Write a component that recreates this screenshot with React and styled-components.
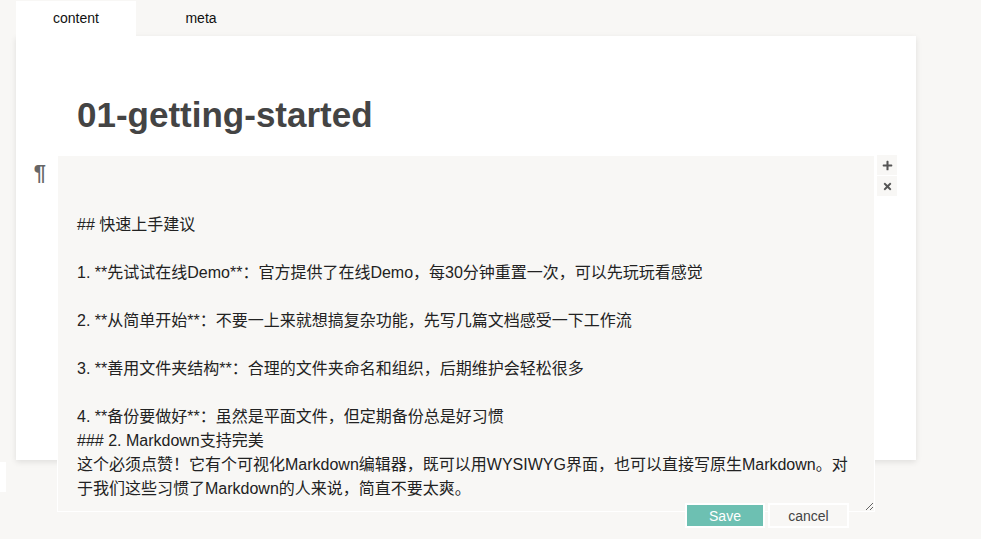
import styled, { createGlobalStyle } from "styled-components";
import { FaPlus, FaTimes } from "react-icons/fa";

const GlobalStyle = createGlobalStyle`
  html, body {
    margin: 0;
    padding: 0;
    background: #f8f7f5;
    font-family: "Liberation Sans", Arial, "Noto Sans CJK SC", sans-serif;
  }
`

const Page = styled.div`
  padding-top: 1px;
  min-height: 539px;
  box-sizing: border-box;
`

const Tabs = styled.div`
  display: flex;
  margin-left: 16px;
  height: 35px;
`

const Tab = styled.div`
  width: ${props => props.width}px;
  height: 35px;
  line-height: 35px;
  text-align: center;
  font-size: 14px;
  color: #111;
  background: ${props => props.active ? "#fff" : "transparent"};
  cursor: pointer;
`

const Card = styled.div`
  margin-left: 16px;
  width: 900px;
  height: 424px;
  box-sizing: border-box;
  padding-top: 58px;
  background: #fff;
  box-shadow: 0 2px 6px rgba(0, 0, 0, 0.1);
`

const Title = styled.h1`
  margin: 0 0 19px 61px;
  font-size: 35px;
  line-height: 42px;
  font-weight: bold;
  color: #444;
`

const EditorRow = styled.div`
  display: flex;
  align-items: flex-start;
`

const Gutter = styled.div`
  width: 41px;
  box-sizing: border-box;
  padding: 6px 11px 0 0;
  text-align: right;
  font-size: 22px;
  font-weight: bold;
  line-height: 24px;
  color: #666;
`

const EditorColumn = styled.div`
  display: flex;
  flex-direction: column;
  width: 818px;
  position: relative;
  z-index: 1;
`

const Source = styled.textarea`
  display: block;
  width: 818px;
  height: 357px;
  box-sizing: border-box;
  margin: 0;
  padding: 9px 20px 10px 19px;
  border: 1px solid #fff;
  outline: none;
  background: #f8f7f5;
  font-family: "Liberation Sans", Arial, "Noto Sans CJK SC", sans-serif;
  font-size: 16px;
  line-height: 24px;
  color: #222;
  resize: vertical;
  overflow: hidden;
`

const Actions = styled.div`
  display: flex;
  justify-content: flex-end;
  gap: 3px;
  margin-top: -9px;
  padding-right: 26px;
`

const ActionButton = styled.button`
  width: ${props => props.width}px;
  height: 25px;
  box-sizing: border-box;
  border: 2px solid #fff;
  padding: 0;
  font-family: "Liberation Sans", Arial, sans-serif;
  font-size: 14px;
  color: ${props => props.primary ? "#fff" : "#444"};
  background: ${props => props.primary ? "#6dc0b2" : "#f8f7f5"};
  cursor: pointer;
`

const Controls = styled.div`
  display: flex;
  flex-direction: column;
  gap: 1px;
  margin-left: 2px;
`

const ControlButton = styled.div`
  width: 20px;
  height: 20px;
  display: flex;
  align-items: center;
  justify-content: center;
  background: #f8f7f5;
  color: #555;
  font-size: 11px;
`

const Stub = styled.div`
  margin-top: 2px;
  width: 6px;
  height: 30px;
  background: #fff;
`

const text = `

## 快速上手建议

1. **先试试在线Demo**：官方提供了在线Demo，每30分钟重置一次，可以先玩玩看感觉

2. **从简单开始**：不要一上来就想搞复杂功能，先写几篇文档感受一下工作流

3. **善用文件夹结构**：合理的文件夹命名和组织，后期维护会轻松很多

4. **备份要做好**：虽然是平面文件，但定期备份总是好习惯
### 2. Markdown支持完美
这个必须点赞！它有个可视化Markdown编辑器，既可以用WYSIWYG界面，也可以直接写原生Markdown。对于我们这些习惯了Markdown的人来说，简直不要太爽。`

export default function App() {
  return (
    <Page>
      <GlobalStyle />
      <Tabs>
        <Tab active width={120}>content</Tab>
        <Tab width={130}>meta</Tab>
      </Tabs>
      <Card>
        <Title>01-getting-started</Title>
        <EditorRow>
          <Gutter>¶</Gutter>
          <EditorColumn>
            <Source defaultValue={text} spellCheck={false} />
            <Actions>
              <ActionButton primary width={80}>Save</ActionButton>
              <ActionButton width={81}>cancel</ActionButton>
            </Actions>
          </EditorColumn>
          <Controls>
            <ControlButton><FaPlus /></ControlButton>
            <ControlButton><FaTimes /></ControlButton>
          </Controls>
        </EditorRow>
      </Card>
      <Stub />
    </Page>
  );
}
